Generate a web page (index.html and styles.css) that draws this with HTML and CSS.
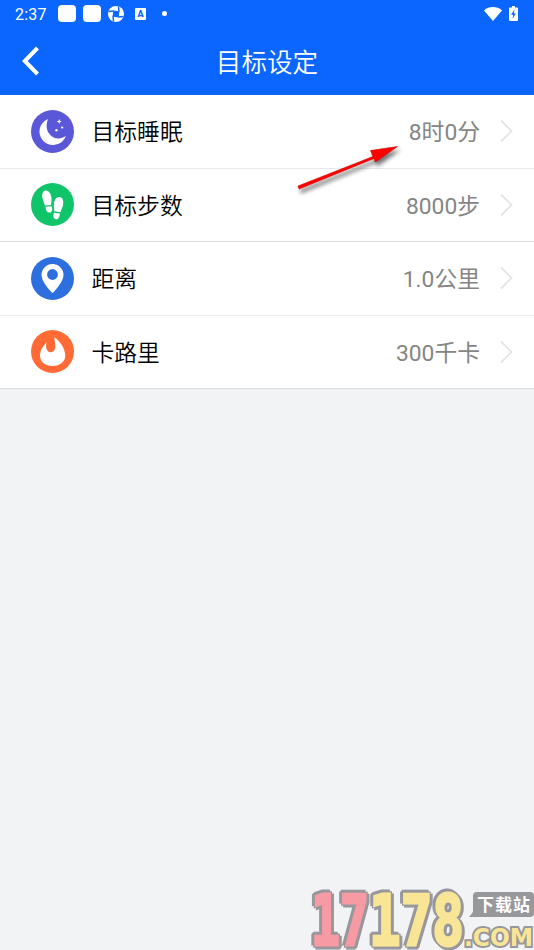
FILE: index.html
```
<!DOCTYPE html>
<html lang="zh-CN">
<head>
    <meta charset="UTF-8">
    <title>目标设定</title>
    <link rel="stylesheet" href="styles.css">
</head>
<body>
    <header class="header">
        <div class="status-bar">
            <span class="time">2:37</span>
            <span class="block"></span>
            <span class="block second"></span>
            <svg class="aperture" width="16" height="16" viewBox="0 0 16 16">
                <circle cx="8" cy="8" r="8" fill="#fff"/>
                <circle cx="8" cy="8" r="3.200" fill="#0a66ff"/>
                <path d="M.5 5.500L6.500 5M10.500 .5L11 6.500M15.500 10.500L9.500 11M5.500 15.500L5 9.500" stroke="#0a66ff" stroke-width="1.500"/>
            </svg>
            <span class="input-method">A</span>
            <span class="dot"></span>
            <svg class="wifi" width="18" height="14" viewBox="0 0 18 14">
                <path d="M0 3.400C5-1 13-1 18 3.400L9 14Z" fill="#fff"/>
            </svg>
            <svg class="battery" width="9" height="15" viewBox="0 0 9 15">
                <path d="M3 0h3v1.500h2q1 0 1 1V14q0 1-1 1H1q-1 0-1-1V2.500q0-1 1-1h2Z" fill="#fff"/>
                <path d="M5.500 3.500L2 8.800h2.200L3.500 12.800 7 7.500H4.900Z" fill="#0a66ff"/>
            </svg>
        </div>
        <div class="nav">
            <svg class="back" width="18" height="30" viewBox="0 0 18 30">
                <path d="M15.500 2L2.800 15L15.500 28" fill="none" stroke="#fff" stroke-width="4"/>
            </svg>
            <h1 class="title">目标设定</h1>
        </div>
    </header>

    <ul class="goals">
        <li class="goal">
            <svg class="icon" viewBox="0 0 43 43">
                <circle cx="21.500" cy="21.500" r="21.500" fill="#5b57d9"/>
                <path d="M17 9C8 13 6 23 11.500 30C18 38 31 36 35 26C29 30 22 29 18.500 24C15 20 15 14 17 9Z" fill="#fff"/>
                <path d="M28.200 9l.7 1.800 1.800.7-1.800.7-.7 1.800-.7-1.800-1.800-.7 1.800-.7Z" fill="#fff"/>
                <circle cx="31.200" cy="17.500" r="1.100" fill="#fff"/>
                <circle cx="25.500" cy="20.300" r="1.200" fill="#fff"/>
            </svg>
            <span class="label">目标睡眠</span>
            <span class="value">8时0分</span>
            <svg class="chevron" viewBox="0 0 13 24"><path d="M1 1.500L11.500 12L1 22.500"/></svg>
        </li>
        <li class="goal">
            <svg class="icon" viewBox="0 0 43 43">
                <circle cx="21.500" cy="21.500" r="21.500" fill="#10c469"/>
                <g fill="#fff">
                    <path d="M14.500 7.500C18 7 20.500 11.500 20.500 16C20.500 18 20.300 20 20 22L13.800 22.500C13.200 19 11 16 11.200 12.500C11.300 9.500 12.500 7.700 14.500 7.500Z"/>
                    <path d="M14.500 23.800L20.500 23.200C22 26 21 29.500 18.700 29.600C16 29.800 14.700 27.500 14.500 23.800Z"/>
                    <path d="M28.500 14C31.500 14.300 32.700 17.500 32.200 21C31.800 24 30.300 26.500 29.400 29.200L23.300 28.300C23.300 26 22.500 23 23 20C23.700 16 26 13.700 28.500 14Z"/>
                    <path d="M23 29.800L28.900 30.400C28.800 33.500 27.500 36.500 25 36.300C22.300 36.100 21.800 32.500 23 29.800Z"/>
                </g>
            </svg>
            <span class="label">目标步数</span>
            <span class="value">8000步</span>
            <svg class="chevron" viewBox="0 0 13 24"><path d="M1 1.500L11.500 12L1 22.500"/></svg>
        </li>
        <li class="goal">
            <svg class="icon" viewBox="0 0 43 43">
                <circle cx="21.500" cy="21.500" r="21.500" fill="#2e6fdf"/>
                <path d="M21.500 7A11 11 0 0 1 32.500 18C32.500 23.500 27 30 22.500 35.300Q21.500 36.400 20.500 35.300C16 30 10.500 23.500 10.500 18A11 11 0 0 1 21.500 7Z" fill="#fff"/>
                <circle cx="21.500" cy="17.500" r="5.400" fill="#2e6fdf"/>
            </svg>
            <span class="label">距离</span>
            <span class="value">1.0公里</span>
            <svg class="chevron" viewBox="0 0 13 24"><path d="M1 1.500L11.500 12L1 22.500"/></svg>
        </li>
        <li class="goal">
            <svg class="icon" viewBox="0 0 43 43">
                <circle cx="21.500" cy="21.500" r="21.500" fill="#ff6a35"/>
                <path d="M15.600 11.800C14 15 9 19 9 25.500C9 32 14.500 36 21.700 36C29 36 34.300 31.500 34.300 25.500C34.300 19 29 11 23.300 7.300C23.500 11 24.600 14 24.200 17.500C23.800 20.500 22 22.300 19.500 22.300C15.500 22.300 14.300 17 15.600 11.800Z" fill="#fff"/>
            </svg>
            <span class="label">卡路里</span>
            <span class="value">300千卡</span>
            <svg class="chevron" viewBox="0 0 13 24"><path d="M1 1.500L11.500 12L1 22.500"/></svg>
        </li>
    </ul>

    <svg class="arrow" width="112" height="56" viewBox="0 0 112 56">
        <path d="M8 46L83 16.500L80.500 10.500L107.500 6.500L85.500 22L84 18.500L9 49Z" fill="#fe0000" stroke="#d00000" stroke-width=".6" stroke-linejoin="round"/>
    </svg>

    <!-- site watermark -->
    <svg class="watermark" width="226" height="64" viewBox="0 0 226 64">
        <g class="digits">
            <text class="pink" x="3" y="59" textLength="58" lengthAdjust="spacingAndGlyphs">17</text>
            <text x="61" y="59" textLength="95" lengthAdjust="spacingAndGlyphs">178</text>
        </g>
        <path d="M161 31L165 26V10q0-4 4-4h53q4 0 4 4v17q0 4-4 4Z" fill="#98979b"/>
        <text class="badge" x="169" y="25" textLength="53">下载站</text>
        <text class="domain" x="156" y="60" textLength="69" lengthAdjust="spacingAndGlyphs">.COM</text>
    </svg>
</body>
</html>
```

FILE: styles.css
```
* {
    box-sizing: border-box;
}
body {
    margin: 0;
    height: 950px;
    overflow: hidden;
    background-color: #f1f3f5;
    font-family: Roboto, "Noto Sans CJK SC", sans-serif;
}
.header {
    height: 95px;
    background-color: #0a66ff;
    color: #fff;
}
.status-bar {
    display: flex;
    align-items: center;
    height: 27px;
    padding: 0 16px 0 15px;
}
.time {
    width: 43px;
    padding-top: 1px;
    font-size: 16px;
    letter-spacing: 0.2px;
}
.block {
    width: 18px;
    height: 17px;
    border-radius: 4px;
    background-color: #fff;
}
.second {
    margin-left: 7px;
}
.aperture {
    margin-left: 7px;
}
.input-method {
    width: 11px;
    height: 12px;
    margin-left: 11px;
    border-radius: 1px;
    background-color: #fff;
    color: #0a66ff;
    font-size: 9px;
    font-weight: 900;
    line-height: 12px;
    text-align: center;
}
.dot {
    width: 5px;
    height: 5px;
    margin-left: 16px;
    border-radius: 50%;
    background-color: #fff;
}
.wifi {
    margin-left: auto;
}
.battery {
    margin-left: 7px;
}
.nav {
    display: grid;
    grid-template-columns: 41px 1fr 41px;
    align-items: center;
    height: 68px;
}
.back {
    margin-left: 22px;
}
.title {
    margin: 3px 0 0;
    font-size: 25.6px;
    font-weight: 350;
    line-height: 38px;
    text-align: center;
}
.goals {
    margin: 0;
    padding: 0;
    list-style: none;
}
.goal {
    display: flex;
    align-items: center;
    height: 73.5px;
    padding: 0 21px 0 31px;
    border-bottom: 1px solid #dcdddf;
    background-color: #fff;
    font-size: 22.8px;
    line-height: 34px;
}
.goal:nth-child(odd) {
    border-bottom-color: #e9e9ea;
}
.icon {
    width: 43px;
    height: 43px;
}
.label {
    margin-left: 17.5px;
    padding-top: 4px;
    color: #000;
    font-weight: 350;
}
.value {
    margin-left: auto;
    padding-top: 4px;
    color: #858585;
}
.chevron {
    width: 13px;
    height: 24px;
    margin-left: 20px;
    fill: none;
    stroke: #e4e4e4;
    stroke-width: 1.8;
}
.arrow {
    position: absolute;
    left: 290px;
    top: 140px;
    filter: drop-shadow(2px 4px 2px rgba(0, 0, 0, 0.55));
}
.watermark {
    position: absolute;
    left: 308px;
    top: 886px;
}
.watermark text {
    paint-order: stroke;
    stroke-linejoin: miter;
    fill: #f8e696;
    stroke: #f8e696;
}
.digits text {
    font-family: "DejaVu Sans Mono", monospace;
    font-size: 69px;
    font-weight: 700;
    stroke-width: 3px;
    filter: drop-shadow(2px 2px 0 #98979b) drop-shadow(-2px -2px 0 #98979b)
        drop-shadow(-1px 1px 0 #98979b) drop-shadow(1px -1px 0 #98979b);
}
.watermark .pink {
    fill: #f89aa4;
    stroke: #f89aa4;
}
.watermark .badge {
    font-family: "Noto Sans CJK SC", sans-serif;
    font-size: 17px;
    font-weight: 700;
    fill: #fff;
    stroke: none;
}
.watermark .domain {
    font-family: "DejaVu Sans", sans-serif;
    font-size: 24px;
    font-weight: 700;
    stroke: #98979b;
    stroke-width: 4px;
}
```
